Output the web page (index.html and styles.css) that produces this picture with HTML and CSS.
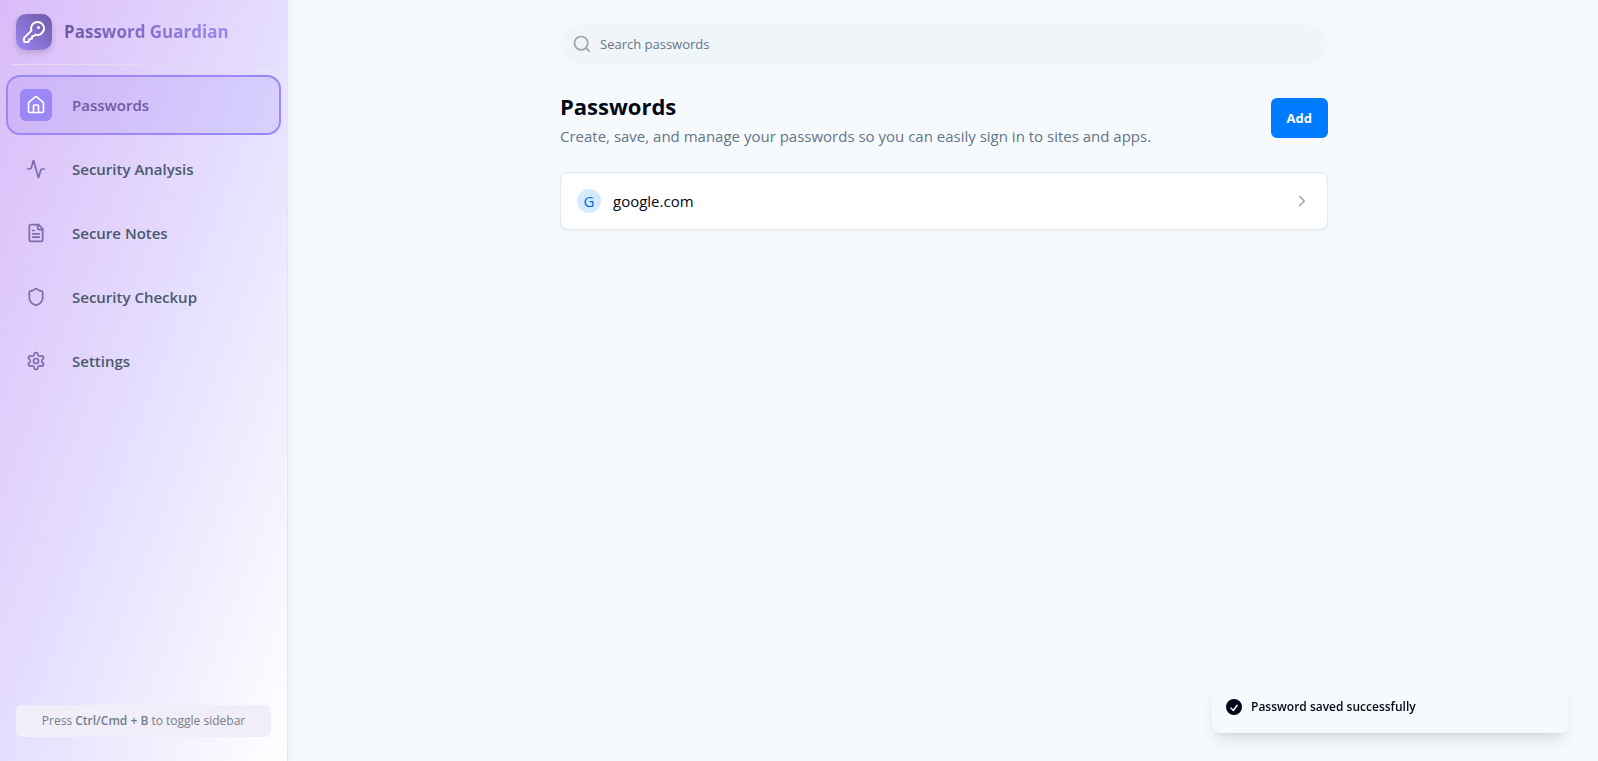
FILE: index.html
```html
<!DOCTYPE html>
<html lang="en">
<head>
<meta charset="utf-8">
<meta name="viewport" content="width=device-width, initial-scale=1">
<title>Password Guardian</title>
<link rel="stylesheet" href="styles.css">
</head>
<body>
<div class="app">
  <aside class="sidebar">
    <header class="brand">
      <span class="brand-mark">
        <svg class="icon icon-lg" viewBox="0 0 24 24"><path d="M2.586 17.414A2 2 0 0 0 2 18.828V21a1 1 0 0 0 1 1h3a1 1 0 0 0 1-1v-1a1 1 0 0 1 1-1h1a1 1 0 0 0 1-1v-1a1 1 0 0 1 1-1h.172a2 2 0 0 0 1.414-.586l.814-.814a6.5 6.5 0 1 0-4-4z"/><circle cx="16.5" cy="7.5" r=".5" fill="currentColor"/></svg>
      </span>
      <span class="brand-name">Password Guardian</span>
    </header>
    <nav class="nav">
      <a class="nav-item active" href="#passwords" aria-current="page">
        <span class="nav-icon"><svg class="icon" viewBox="0 0 24 24"><path d="M15 21v-8a1 1 0 0 0-1-1h-4a1 1 0 0 0-1 1v8"/><path d="M3 10a2 2 0 0 1 .709-1.528l7-5.999a2 2 0 0 1 2.582 0l7 5.999A2 2 0 0 1 21 10v9a2 2 0 0 1-2 2H5a2 2 0 0 1-2-2z"/></svg></span>
        <span>Passwords</span>
      </a>
      <a class="nav-item" href="#analysis">
        <span class="nav-icon"><svg class="icon" viewBox="0 0 24 24"><path d="M22 12h-2.480a2 2 0 0 0-1.930 1.460l-2.350 8.360a.25.25 0 0 1-.48 0L9.240 2.180a.25.25 0 0 0-.48 0l-2.350 8.360A2 2 0 0 1 4.490 12H2"/></svg></span>
        <span>Security Analysis</span>
      </a>
      <a class="nav-item" href="#notes">
        <span class="nav-icon"><svg class="icon" viewBox="0 0 24 24"><path d="M15 2H6a2 2 0 0 0-2 2v16a2 2 0 0 0 2 2h12a2 2 0 0 0 2-2V7Z"/><path d="M14 2v4a2 2 0 0 0 2 2h4"/><path d="M10 9H8"/><path d="M16 13H8"/><path d="M16 17H8"/></svg></span>
        <span>Secure Notes</span>
      </a>
      <a class="nav-item" href="#checkup">
        <span class="nav-icon"><svg class="icon" viewBox="0 0 24 24"><path d="M20 13c0 5-3.500 7.500-7.660 8.950a1 1 0 0 1-.67-.01C7.500 20.500 4 18 4 13V6a1 1 0 0 1 1-1c2 0 4.500-1.200 6.240-2.720a1.170 1.170 0 0 1 1.520 0C14.510 3.810 17 5 19 5a1 1 0 0 1 1 1z"/></svg></span>
        <span>Security Checkup</span>
      </a>
      <a class="nav-item" href="#settings">
        <span class="nav-icon"><svg class="icon" viewBox="0 0 24 24"><path d="M12.220 2h-.44a2 2 0 0 0-2 2v.18a2 2 0 0 1-1 1.730l-.43.25a2 2 0 0 1-2 0l-.15-.08a2 2 0 0 0-2.730.73l-.22.38a2 2 0 0 0 .73 2.730l.15.1a2 2 0 0 1 1 1.720v.51a2 2 0 0 1-1 1.740l-.15.09a2 2 0 0 0-.73 2.730l.22.38a2 2 0 0 0 2.730.73l.15-.08a2 2 0 0 1 2 0l.43.25a2 2 0 0 1 1 1.730V20a2 2 0 0 0 2 2h.44a2 2 0 0 0 2-2v-.18a2 2 0 0 1 1-1.730l.43-.25a2 2 0 0 1 2 0l.15.08a2 2 0 0 0 2.730-.73l.22-.39a2 2 0 0 0-.73-2.730l-.15-.08a2 2 0 0 1-1-1.740v-.5a2 2 0 0 1 1-1.740l.15-.09a2 2 0 0 0 .73-2.730l-.22-.38a2 2 0 0 0-2.730-.73l-.15.08a2 2 0 0 1-2 0l-.43-.25a2 2 0 0 1-1-1.730V4a2 2 0 0 0-2-2z"/><circle cx="12" cy="12" r="3"/></svg></span>
        <span>Settings</span>
      </a>
    </nav>
    <footer class="hint">Press <strong>Ctrl/Cmd + B</strong> to toggle sidebar</footer>
  </aside>

  <main class="main">
    <div class="content">
      <label class="search">
        <svg class="icon search-icon" viewBox="0 0 24 24"><circle cx="11" cy="11" r="8"/><path d="m21 21-4.300-4.300"/></svg>
        <input class="search-input" type="search" placeholder="Search passwords" aria-label="Search passwords">
      </label>
      <section class="heading">
        <div>
          <h1 class="title">Passwords</h1>
          <p class="subtitle">Create, save, and manage your passwords so you can easily sign in to sites and apps.</p>
        </div>
        <button class="add" type="button">Add</button>
      </section>
      <a class="entry" href="#google.com">
        <span class="avatar">G</span>
        <span class="entry-name">google.com</span>
        <svg class="icon chevron" viewBox="0 0 24 24"><path d="m9 18 6-6-6-6"/></svg>
      </a>
    </div>
  </main>
</div>
<div class="toast" role="status">
  <svg class="toast-icon" viewBox="0 0 20 20"><path fill-rule="evenodd" clip-rule="evenodd" d="M10 20a10 10 0 1 0 0-20 10 10 0 0 0 0 20Zm4.600-11.700a.9.900 0 0 0-1.450-1.060l-4.100 5.700-2.250-2.250a.9.900 0 0 0-1.270 1.270l3 3a.9.900 0 0 0 1.370-.11z"/></svg>
  <span>Password saved successfully</span>
</div>
</body>
</html>
```

FILE: styles.css
```css
* {
  box-sizing: border-box;
}

body {
  margin: 0;
  background: #f7fafd;
  color: #020817;
  font-family: "Segoe UI", "Open Sans", "Noto Sans", sans-serif;
  font-size: 15px;
  line-height: 24px;
}

a {
  color: inherit;
  text-decoration: none;
}

.icon {
  width: 20px;
  height: 20px;
  fill: none;
  stroke: currentColor;
  stroke-width: 2;
  stroke-linecap: round;
  stroke-linejoin: round;
}

.icon-lg {
  width: 24px;
  height: 24px;
}

.app {
  display: grid;
  grid-template-columns: 288px 1fr;
  column-gap: 2px;
  min-height: 100vh;
}

.sidebar {
  display: flex;
  flex-direction: column;
  border-right: 1px solid #e5e5ee;
  background: linear-gradient(to bottom right, #dabbf8, #e5deff, #ffffff);
  box-shadow: 2px 0 10px rgba(0, 0, 0, 0.05);
}

.brand {
  display: flex;
  align-items: center;
  gap: 12px;
  margin: 0 12px;
  padding: 14px 4px;
  border-bottom: 1px solid #e2daf0;
}

.brand-mark {
  display: grid;
  place-items: center;
  width: 36px;
  height: 36px;
  border-radius: 10px;
  background: linear-gradient(to top right, #9b87f5, #6e59a5);
  box-shadow: 0 3px 6px rgba(0, 0, 0, 0.16);
  color: #ffffff;
}

.brand-name {
  background: linear-gradient(to right, #6e59a5, #9b87f5);
  background-clip: text;
  color: transparent;
  font-size: 17px;
  font-weight: 700;
}

.nav {
  display: flex;
  flex: 1;
  flex-direction: column;
  gap: 4px;
  padding: 10px 6px;
}

.nav-item {
  display: flex;
  align-items: center;
  gap: 20px;
  height: 60px;
  padding: 0 12px;
  border: 2px solid transparent;
  border-radius: 14px;
  color: #4a5a6a;
  font-weight: 600;
}

.nav-icon {
  display: grid;
  place-items: center;
  width: 32px;
  height: 32px;
  border-radius: 6px;
  color: #7e69ab;
}

.nav-item.active {
  border-color: #9b87f5;
  background: rgba(155, 135, 245, 0.2);
  color: #7358a8;
}

.active .nav-icon {
  background: #9b87f5;
  color: #ffffff;
}

.hint {
  margin: 24px 16px;
  padding: 4px 8px;
  border-radius: 6px;
  background: #f1eefa;
  color: #737d8c;
  font-size: 12px;
  text-align: center;
}

.hint strong {
  font-weight: 600;
}

.main {
  padding: 24px;
}

.content {
  max-width: 768px;
  margin: 0 auto;
}

.search {
  display: flex;
  align-items: center;
  gap: 8px;
  height: 40px;
  padding: 0 12px;
  border-radius: 20px;
  background: #f0f5f9;
}

.search-icon {
  color: #9ca3af;
}

.search-input {
  flex: 1;
  padding: 0;
  border: 0;
  outline: 0;
  background: transparent;
  color: inherit;
  font: inherit;
  font-size: 13px;
}

.search-input::placeholder {
  color: #64748b;
}

.heading {
  display: flex;
  align-items: center;
  justify-content: space-between;
  margin: 24px 0;
}

.title {
  margin: 0;
  font-size: 22px;
  font-weight: 700;
  line-height: 36px;
}

.subtitle {
  margin: 0;
  color: #64748b;
}

.add {
  height: 40px;
  padding: 0 16px;
  border: 0;
  border-radius: 6px;
  background: #007bff;
  color: #ffffff;
  font: inherit;
  font-size: 13px;
  font-weight: 700;
}

.entry {
  display: flex;
  align-items: center;
  gap: 12px;
  height: 58px;
  padding: 0 16px;
  border: 1px solid #e0e8f0;
  border-radius: 8px;
  background: #ffffff;
  box-shadow: 0 1px 2px rgba(0, 0, 0, 0.05);
}

.avatar {
  width: 24px;
  height: 24px;
  border-radius: 50%;
  background: #d6eaff;
  color: #0066ee;
  text-align: center;
}

.entry-name {
  flex: 1;
}

.chevron {
  width: 18px;
  height: 18px;
  color: #9ca3af;
}

.toast {
  position: fixed;
  right: 30px;
  bottom: 28px;
  display: flex;
  align-items: center;
  gap: 9px;
  width: 356px;
  padding: 14px;
  border-radius: 8px;
  background: #f7fafd;
  box-shadow: 0 10px 15px -3px rgba(0, 0, 0, 0.1), 0 4px 6px -4px rgba(0, 0, 0, 0.1);
  font-size: 12px;
  font-weight: 600;
}

.toast-icon {
  width: 16px;
  height: 16px;
  fill: #020817;
}
```
